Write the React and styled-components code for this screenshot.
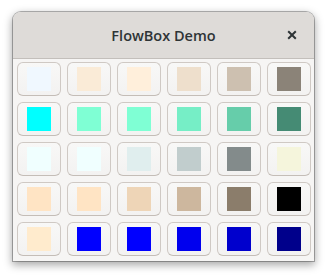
import React from "react";
import styled, { createGlobalStyle } from "styled-components";

const Global = createGlobalStyle`
  html, body { margin: 0; padding: 0; background: #ffffff; }
  body { font-family: "Noto Sans", "DejaVu Sans", sans-serif; }
`;

const Page = styled.div`
  box-sizing: border-box;
  height: 279px;
  padding: 12px 0 0 13px;
`;

const Window = styled.div`
  width: 301px;
  height: 249px;
  display: flex;
  flex-direction: column;
  border-radius: 8px 8px 0 0;
  background: #f6f5f4;
  box-shadow: 0 0 0 1px rgba(0, 0, 0, 0.28), 0 3px 8px 1px rgba(0, 0, 0, 0.35);
  overflow: hidden;
`;

const HeaderBar = styled.div`
  height: 46px;
  flex: none;
  display: grid;
  grid-template-columns: 1fr auto 1fr;
  align-items: center;
  background: #dedbd8;
  border-bottom: 1px solid #c3bfbb;
`;

const Title = styled.div`
  grid-column: 2;
  font-family: "Open Sans", "Noto Sans", sans-serif;
  font-weight: 600;
  font-size: 14.5px;
  color: #2e3436;
`;

const CloseButton = styled.div`
  grid-column: 3;
  justify-self: end;
  width: 28px;
  height: 28px;
  margin-right: 8px;
  display: flex;
  align-items: center;
  justify-content: center;
`;

const Flow = styled.div`
  padding: 3px 3px 5px 4px;
  display: grid;
  grid-template-columns: repeat(6, 44px);
  grid-auto-rows: 34px;
  column-gap: 6px;
  row-gap: 6px;
`;

const ColorButton = styled.div`
  box-sizing: border-box;
  display: flex;
  align-items: center;
  justify-content: center;
  border: 1px solid #cfc9c4;
  border-bottom-color: #c4bdb7;
  border-radius: 6px;
  background: linear-gradient(to bottom, #f8f8f7, #f3f2f1);
`;

const Swatch = styled.div`
  width: 24px;
  height: 24px;
  background: ${(p) => p.$color};
`;

const colors = [
  "#f0f8ff", "#faebd7", "#ffefdb", "#eedfcc", "#cdc0b0", "#8b8378",
  "#00ffff", "#7fffd4", "#7fffd4", "#76eec6", "#66cdaa", "#458b74",
  "#f0ffff", "#f0ffff", "#e0eeee", "#c1cdcd", "#838b8b", "#f5f5dc",
  "#ffe4c4", "#ffe4c4", "#eed5b7", "#cdb79e", "#8b7d6b", "#000000",
  "#ffebcd", "#0000ff", "#0000ff", "#0000ee", "#0000cd", "#00008b",
];

export default function App() {
  return (
    <Page>
      <Global />
      <Window>
        <HeaderBar>
          <Title>FlowBox Demo</Title>
          <CloseButton>
            <svg width="10" height="10" viewBox="0 0 10 10">
              <path d="M1.2 1.2 L8.8 8.8 M8.8 1.2 L1.2 8.8" stroke="#2e3436" strokeWidth="2" strokeLinecap="butt" />
            </svg>
          </CloseButton>
        </HeaderBar>
        <Flow>
          {colors.map((c, i) => (
            <ColorButton key={i}>
              <Swatch $color={c} />
            </ColorButton>
          ))}
        </Flow>
      </Window>
    </Page>
  );
}
